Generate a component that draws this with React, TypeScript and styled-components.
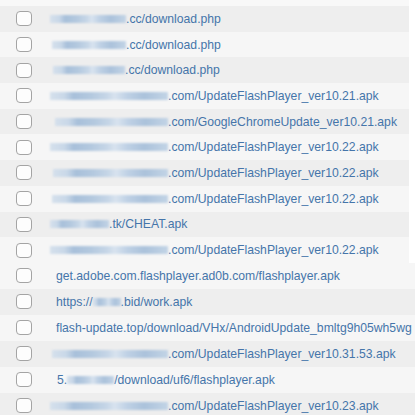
import React from 'react';
import styled, { createGlobalStyle } from 'styled-components';

type Shade = 'dark' | 'light';

interface Part {
  text?: string;
  blur?: number;
}

interface Entry {
  parts: Part[];
  indent: number;
}

const upperRows: Entry[] = [
  { indent: 50, parts: [{ blur: 76 }, { text: '.cc/download.php' }] },
  { indent: 52, parts: [{ blur: 74 }, { text: '.cc/download.php' }] },
  { indent: 53, parts: [{ blur: 72 }, { text: '.cc/download.php' }] },
  { indent: 50, parts: [{ blur: 118 }, { text: '.com/UpdateFlashPlayer_ver10.21.apk' }] },
  { indent: 55, parts: [{ blur: 113 }, { text: '.com/GoogleChromeUpdate_ver10.21.apk' }] },
  { indent: 50, parts: [{ blur: 118 }, { text: '.com/UpdateFlashPlayer_ver10.22.apk' }] },
  { indent: 53, parts: [{ blur: 115 }, { text: '.com/UpdateFlashPlayer_ver10.22.apk' }] },
  { indent: 52, parts: [{ blur: 116 }, { text: '.com/UpdateFlashPlayer_ver10.22.apk' }] },
  { indent: 50, parts: [{ blur: 59 }, { text: '.tk/CHEAT.apk' }] },
  { indent: 50, parts: [{ blur: 118 }, { text: '.com/UpdateFlashPlayer_ver10.22.apk' }] },
];

const lowerRows: Entry[] = [
  { indent: 56, parts: [{ text: 'get.adobe.com.flashplayer.ad0b.com/flashplayer.apk' }] },
  { indent: 56, parts: [{ text: 'https://' }, { blur: 28 }, { text: '.bid/work.apk' }] },
  { indent: 56, parts: [{ text: 'flash-update.top/download/VHx/AndroidUpdate_bmltg9h05wh5wg' }] },
  { indent: 52, parts: [{ blur: 116 }, { text: '.com/UpdateFlashPlayer_ver10.31.53.apk' }] },
  { indent: 57, parts: [{ text: '5.' }, { blur: 47 }, { text: '/download/uf6/flashplayer.apk' }] },
  { indent: 50, parts: [{ blur: 118 }, { text: '.com/UpdateFlashPlayer_ver10.23.apk' }] },
];

const GlobalStyle = createGlobalStyle`
  html, body {
    margin: 0;
    padding: 0;
    background: #ffffff;
    overflow: hidden;
  }
  body {
    font-family: "Liberation Sans", Arial, sans-serif;
  }
`;

const Page = styled.div`
  width: 415px;
  height: 415px;
  overflow: hidden;
  display: flex;
  flex-direction: column;
`;

const UpperTable = styled.div`
  width: 409px;
  padding-top: 6px;
  background: #f8f8f8;
`;

const LowerTable = styled.div`
  width: 415px;
`;

const Row = styled.div<{ $shade: Shade; $height: number }>`
  display: flex;
  align-items: center;
  height: ${(p) => p.$height}px;
  background: ${(p) => (p.$shade === 'dark' ? '#eeeeee' : '#f6f6f6')};
  white-space: nowrap;
  overflow: hidden;
`;

const CheckCell = styled.div`
  flex: none;
  width: 16px;
  padding-left: 16px;
  display: flex;
  align-items: center;
`;

const Checkbox = styled.span`
  display: block;
  width: 14px;
  height: 13px;
  border: 1px solid #a4a4a4;
  border-radius: 4px;
  background: #fdfdfd;
`;

const Link = styled.a<{ $indent: number }>`
  display: flex;
  align-items: center;
  margin-left: ${(p) => p.$indent - 32}px;
  font-size: 12.2px;
  color: #4575aa;
  text-decoration: none;
`;

const Redacted = styled.span`
  display: inline-block;
  height: 8px;
  background: linear-gradient(
    90deg,
    #d5e0ec 0%,
    #c9d8e8 12%,
    #a8c0da 20%,
    #b4c9df 35%,
    #c6d6e7 48%,
    #d8e3ef 55%,
    #bfd1e5 65%,
    #abc2db 80%,
    #c3d4e6 100%
  );
  filter: blur(1px);
`;

const TableRows = ({ rows, height, startDark }: { rows: Entry[]; height: number; startDark: boolean }) => (
  <>
    {rows.map((row, i) => (
      <Row key={i} $height={height} $shade={(i % 2 === 0) === startDark ? 'dark' : 'light'}>
        <CheckCell>
          <Checkbox />
        </CheckCell>
        <Link $indent={row.indent} href="#">
          {row.parts.map((part, j) =>
            part.blur ? <Redacted key={j} style={{ width: part.blur }} /> : <span key={j}>{part.text}</span>
          )}
        </Link>
      </Row>
    ))}
  </>
);

const App = (): JSX.Element => (
  <Page>
    <GlobalStyle />
    <UpperTable>
      <TableRows rows={upperRows} height={25.7} startDark />
    </UpperTable>
    <LowerTable>
      <TableRows rows={lowerRows} height={26} startDark={false} />
    </LowerTable>
  </Page>
);

export default App;
